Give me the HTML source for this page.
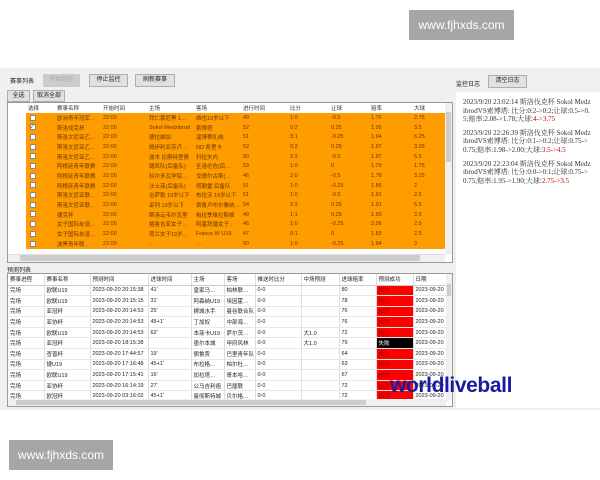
<!DOCTYPE html>
<html><head><meta charset="utf-8"><style>
*{margin:0;padding:0;box-sizing:border-box}
body{width:600px;height:480px;background:#fff;position:relative;overflow:hidden;font-family:"Liberation Sans","Noto Sans CJK SC",sans-serif;font-size:6px;color:#222}
.abs{position:absolute}
.app{left:0;top:68px;width:600px;height:342px;background:#f0f0f0}
.btn{position:absolute;background:#e1e1e1;border:1px solid #adadad;font-size:6px;text-align:center;line-height:11px;height:13px}
.wm{position:absolute;background:#a6a6a6;color:#fff;font-size:12px;text-align:center;line-height:30px}
table{border-collapse:collapse;table-layout:fixed;position:absolute}
td{white-space:nowrap;overflow:hidden;padding-left:2px;font-size:5.5px}
.t1 td{height:9.7px;color:#6a3500}
.t1 tr.h td{background:#fff;color:#333;height:10px}
.t1 tr.r td{background:#ff9c00}
.t1 tr.r td.f{background:#fff}
.t2 td{height:10.6px;border-right:1px solid #ddd;border-bottom:1px solid #e8e8e8;background:#fff}
.t2 tr.h td{height:11px;background:#fff;border-bottom:1px solid #ccc}
.t2 td.red{background:#f00;color:#900}
.t2 td.blk{background:#000;color:#fff}
.cb{display:inline-block;width:6px;height:6px;border:1px solid #888;background:#fff;vertical-align:middle;font-size:5px;line-height:4px;color:#333}
.log{font-family:"Liberation Serif","Noto Serif CJK SC",serif;font-size:7px;line-height:8.6px;color:#333;margin-bottom:5px;width:128px;word-break:break-all}
.log b{font-weight:normal;color:#c00}
</style></head><body>
<div class="wm" style="left:409px;top:10px;width:105px;height:30px">www.fjhxds.com</div>
<div class="wm" style="left:9px;top:440px;width:104px;height:30px">www.fjhxds.com</div>
<div class="abs app"></div>
<div class="abs" style="left:10px;top:76px;font-size:6px">赛事列表</div>
<div class="btn" style="left:43px;top:74px;width:37px;color:#aaa;background:#ccc;border-color:#ccc">开始监控</div>
<div class="btn" style="left:89px;top:74px;width:39px">停止监控</div>
<div class="btn" style="left:135px;top:74px;width:40px">刷新赛事</div>
<div class="btn" style="left:7px;top:90px;width:23px;height:12px;line-height:10px">全选</div>
<div class="btn" style="left:33px;top:90px;width:32px;height:12px;line-height:10px">取消全部</div>
<div class="abs" style="left:456px;top:79px">监控日志</div>
<div class="btn" style="left:488px;top:75px;width:39px">清空日志</div>
<div class="abs" style="left:456px;top:92px;width:144px;height:316px;background:#fff;padding:6px 0 0 7px">
<div class="log">2023/9/20 23:02:14 斯洛伐克杯 Sokol MedzibrodVS索博塔: 比分:0:2->0:2;让球:0.5->0.5;赔率:2.08->1.78;大球:<b>4->3.75</b></div>
<div class="log">2023/9/20 22:26:39 斯洛伐克杯 Sokol MedzibrodVS索博塔: 比分:0:1->0:2;让球:0.75->0.75;赔率:1.98->2.00;大球:<b>3.5->4.5</b></div>
<div class="log">2023/9/20 22:23:04 斯洛伐克杯 Sokol MedzibrodVS索博塔: 比分:0:0->0:1;让球:0.75->0.75;赔率:1.95->1.90;大球:<b>2.75->3.5</b></div>
</div>
<div class="abs" style="left:7px;top:102px;width:446px;height:161px;background:#fff;border:1px solid #999"></div>
<table class="t1" style="left:8px;top:103px;width:437px">
<colgroup><col style="width:18px"><col style="width:29px"><col style="width:46px"><col style="width:46px"><col style="width:47px"><col style="width:47px"><col style="width:47px"><col style="width:41px"><col style="width:40px"><col style="width:43px"><col style="width:33px"></colgroup>
<tr class="h"><td></td><td>选择</td><td>赛事名称</td><td>开始时间</td><td>主场</td><td>客场</td><td>进行时间</td><td>比分</td><td>让球</td><td>赔率</td><td>大球</td></tr>
<tr class="r"><td class="f"></td><td>&nbsp;<span class="cb"></span></td><td>欧洲青年冠军…</td><td>22:00</td><td>拜仁慕尼黑 1…</td><td>维也19岁以下</td><td>49</td><td>1:0</td><td>-0.5</td><td>1.76</td><td>2.75</td></tr>
<tr class="r"><td class="f"></td><td>&nbsp;<span class="cb">✓</span></td><td>斯洛伐克杯</td><td>22:00</td><td>Sokol Medzibrod</td><td>索博塔</td><td>52</td><td>0:2</td><td>0.25</td><td>1.95</td><td>3.5</td></tr>
<tr class="r"><td class="f"></td><td>&nbsp;<span class="cb"></span></td><td>斯洛文尼亚乙…</td><td>22:00</td><td>德拉维加</td><td>温博蒂扎纳</td><td>51</td><td>3:1</td><td>-0.25</td><td>1.94</td><td>6.25</td></tr>
<tr class="r"><td class="f"></td><td>&nbsp;<span class="cb"></span></td><td>斯洛文尼亚乙…</td><td>22:00</td><td>姆伊利亚苏卢…</td><td>ND 凯里卡</td><td>52</td><td>0:2</td><td>0.25</td><td>1.97</td><td>3.25</td></tr>
<tr class="r"><td class="f"></td><td>&nbsp;<span class="cb"></span></td><td>斯洛文尼亚乙…</td><td>22:00</td><td>波木 比斯特里察</td><td>科拉夫内</td><td>50</td><td>2:2</td><td>-0.5</td><td>1.97</td><td>5.5</td></tr>
<tr class="r"><td class="f"></td><td>&nbsp;<span class="cb"></span></td><td>阿根廷青年联赛</td><td>22:00</td><td>飓风队(后备队)</td><td>圣洛伦佐(后…</td><td>53</td><td>1:0</td><td>0</td><td>1.79</td><td>1.75</td></tr>
<tr class="r"><td class="f"></td><td>&nbsp;<span class="cb"></span></td><td>阿根廷青年联赛</td><td>22:00</td><td>科尔多瓦学院…</td><td>戈德尔古斯(…</td><td>46</td><td>2:0</td><td>-0.5</td><td>1.78</td><td>3.25</td></tr>
<tr class="r"><td class="f"></td><td>&nbsp;<span class="cb"></span></td><td>阿根廷青年联赛</td><td>22:00</td><td>沙士菲(后备队)</td><td>塔勒雷 后备队</td><td>51</td><td>1:0</td><td>-0.25</td><td>1.86</td><td>2</td></tr>
<tr class="r"><td class="f"></td><td>&nbsp;<span class="cb"></span></td><td>斯洛文尼亚联…</td><td>22:00</td><td>治萨勒 19岁以下</td><td>布拉沃 19岁以下</td><td>51</td><td>1:0</td><td>-0.5</td><td>1.91</td><td>2.5</td></tr>
<tr class="r"><td class="f"></td><td>&nbsp;<span class="cb"></span></td><td>斯洛文尼亚联…</td><td>22:00</td><td>采列 19岁以下</td><td>费鲁卢布尔雅纳…</td><td>54</td><td>2:2</td><td>0.25</td><td>1.91</td><td>5.5</td></tr>
<tr class="r"><td class="f"></td><td>&nbsp;<span class="cb"></span></td><td>捷克杯</td><td>22:00</td><td>斯洛云韦尔瓦里</td><td>帕拉季维拉斯维</td><td>49</td><td>1:1</td><td>0.25</td><td>1.93</td><td>3.5</td></tr>
<tr class="r"><td class="f"></td><td>&nbsp;<span class="cb"></span></td><td>女子国际友谊…</td><td>22:00</td><td>格鲁吉亚女子…</td><td>阿塞拜疆女子…</td><td>46</td><td>1:0</td><td>-0.25</td><td>2.05</td><td>2.5</td></tr>
<tr class="r"><td class="f"></td><td>&nbsp;<span class="cb"></span></td><td>女子国际友谊…</td><td>22:00</td><td>荷兰女子19岁…</td><td>France W U19</td><td>47</td><td>0:1</td><td>0</td><td>1.83</td><td>2.5</td></tr>
<tr class="r"><td class="f"></td><td>&nbsp;<span class="cb"></span></td><td>波黑青年联…</td><td>22:00</td><td>…</td><td>…</td><td>50</td><td>1:0</td><td>-0.25</td><td>1.84</td><td>3</td></tr>
</table>
<div class="abs" style="left:445px;top:103px;width:7px;height:152px;background:#f0f0f0"></div>
<div class="abs" style="left:446px;top:112px;width:5px;height:50px;background:#cdcdcd"></div>
<div class="abs" style="left:8px;top:254px;width:437px;height:8px;background:#f0f0f0;border-top:1px solid #ddd"></div>
<div class="abs" style="left:20px;top:255px;width:400px;height:6px;background:#cdcdcd"></div>
<div class="abs" style="left:7px;top:265px">预测列表</div>
<div class="abs" style="left:7px;top:273px;width:446px;height:134px;background:#fff;border:1px solid #999"></div>
<table class="t2" style="left:8px;top:274px;width:438px">
<colgroup><col style="width:36px"><col style="width:46px"><col style="width:58px"><col style="width:43px"><col style="width:33px"><col style="width:31px"><col style="width:46px"><col style="width:38px"><col style="width:37px"><col style="width:37px"><col style="width:33px"></colgroup>
<tr class="h"><td>赛事进程</td><td>赛事名称</td><td>预测时间</td><td>进球时间</td><td>主场</td><td>客场</td><td>推送时比分</td><td>中场预测</td><td>进球赔率</td><td>预测成功</td><td>日期</td></tr>
<tr><td>完场</td><td>欧联U19</td><td>2023-09-20 20:15:38</td><td>41'</td><td>皇家马…</td><td>柏林联…</td><td>0-0</td><td></td><td>80</td><td class="red">成功</td><td>2023-09-20</td></tr>
<tr><td>完场</td><td>欧联U19</td><td>2023-09-20 20:15:15</td><td>31'</td><td>阿森纳U19</td><td>埃因霍…</td><td>0-0</td><td></td><td>78</td><td class="red">成功</td><td>2023-09-20</td></tr>
<tr><td>完场</td><td>亚冠杯</td><td>2023-09-20 20:14:53</td><td>25'</td><td>狮城水手</td><td>曼谷联合队</td><td>0-0</td><td></td><td>76</td><td class="red">成功</td><td>2023-09-20</td></tr>
<tr><td>完场</td><td>亚协杯</td><td>2023-09-20 20:14:53</td><td>45+1'</td><td>丁加奴</td><td>中部海…</td><td>0-0</td><td></td><td>76</td><td class="red">成功</td><td>2023-09-20</td></tr>
<tr><td>完场</td><td>欧联U19</td><td>2023-09-20 20:14:53</td><td>62'</td><td>本菲卡U19</td><td>萨尔茨…</td><td>0-0</td><td>大1.0</td><td>72</td><td class="red">成功</td><td>2023-09-20</td></tr>
<tr><td>完场</td><td>亚冠杯</td><td>2023-09-20 18:15:38</td><td></td><td>墨尔本城</td><td>甲府风林</td><td>0-0</td><td>大1.0</td><td>79</td><td class="blk">失败</td><td>2023-09-20</td></tr>
<tr><td>完场</td><td>查普杯</td><td>2023-09-20 17:44:57</td><td>19'</td><td>佩鲁贾</td><td>巴里青年队</td><td>0-0</td><td></td><td>64</td><td class="red">成功</td><td>2023-09-20</td></tr>
<tr><td>完场</td><td>捷U19</td><td>2023-09-20 17:16:48</td><td>45+1'</td><td>布拉格…</td><td>帕尔杜…</td><td>0-0</td><td></td><td>63</td><td class="red">成功</td><td>2023-09-20</td></tr>
<tr><td>完场</td><td>欧联U19</td><td>2023-09-20 17:15:41</td><td>16'</td><td>加拉塔…</td><td>哥本哈…</td><td>0-0</td><td></td><td>67</td><td class="red">成功</td><td>2023-09-20</td></tr>
<tr><td>完场</td><td>亚协杯</td><td>2023-09-20 16:14:19</td><td>27'</td><td>公马吉利祖</td><td>巴厘联</td><td>0-0</td><td></td><td>72</td><td class="red">成功</td><td>2023-09-20</td></tr>
<tr><td>完场</td><td>欧冠杯</td><td>2023-09-20 03:16:02</td><td>45+1'</td><td>曼彻斯特城</td><td>贝尔格…</td><td>0-0</td><td></td><td>72</td><td class="red">成功</td><td>2023-09-20</td></tr>
</table>
<div class="abs" style="left:446px;top:274px;width:6px;height:126px;background:#f0f0f0"></div>
<div class="abs" style="left:447px;top:284px;width:4px;height:12px;background:#cdcdcd"></div>
<div class="abs" style="left:8px;top:399px;width:438px;height:7px;background:#f0f0f0"></div>
<div class="abs" style="left:16px;top:400px;width:350px;height:5px;background:#cdcdcd"></div>
<div class="abs" style="left:390px;top:374px;font-size:21px;font-weight:bold;color:#1a1a9e;letter-spacing:-0.4px">worldliveball</div>
</body></html>
